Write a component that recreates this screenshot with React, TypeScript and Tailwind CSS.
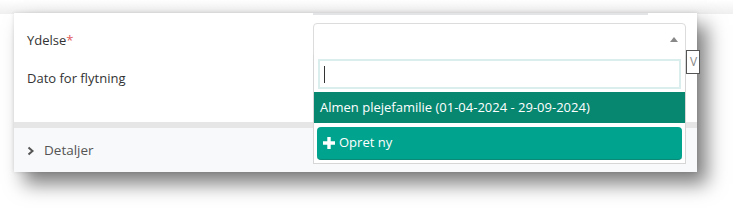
import React from 'react';

export default function App() {
  return (
    <div className="w-[733px] h-[208px] bg-white overflow-hidden relative" style={{ fontFamily: '"Open Sans", "Noto Sans", sans-serif' }}>
      <div className="absolute inset-x-0 top-0 h-[14px] bg-gradient-to-b from-white to-[#efefef]" />
      {/* Kort */}
      <div className="relative ml-[14px] mt-[13px] w-[683px] h-[159px] bg-white shadow-[10px_12px_18px_rgba(0,0,0,0.5),0_0_4px_rgba(0,0,0,0.12)] flex flex-col text-[13px] text-[#333]">
        <div className="absolute left-[299px] top-0 w-[335px] h-[2px] bg-[#e2e4e6]" />
        <div className="flex flex-col pl-[13px] pt-[18px] gap-[20px] h-[109px]">
          <div className="h-[18px] leading-[18px]">
            Ydelse<span className="text-[#e05a5a]">*</span>
          </div>
          <div className="h-[18px] leading-[18px]">Dato for flytning</div>
        </div>
        <div className="h-[6px] bg-[#e6e6e6]" />
        <div className="flex-1 bg-[#f8f9fa] flex items-center pl-[13px] gap-[9px] text-[#555]">
          <svg width="8" height="10" viewBox="0 0 8 10" className="mt-[1px]">
            <path d="M1.5 1.5 L5.5 5 L1.5 8.5" fill="none" stroke="#555" strokeWidth="2" />
          </svg>
          <span className="text-[13.5px]">Detaljer</span>
        </div>

        {/* Skjult knap bag dropdown */}
        <div className="absolute left-[672px] top-[37px] w-[14px] h-[24px] border border-[#555] bg-white overflow-hidden flex items-center pl-[3px] text-[12px] text-[#888]">
          V
        </div>

        {/* Select */}
        <div className="absolute left-[299px] top-[10px] w-[373px] h-[33px] bg-white border border-[#dcdcdc] rounded-t-[4px] flex items-center justify-end pr-[7px]">
          <svg width="8" height="5" viewBox="0 0 8 5">
            <path d="M0 5 L4 0 L8 5 Z" fill="#888" />
          </svg>
        </div>

        {/* Dropdown */}
        <div className="absolute left-[299px] top-[42px] w-[373px] h-[109px] bg-white border border-[#d6d6d6] border-t-0 flex flex-col">
          <div className="mx-[4px] mt-[4px] h-[30px] border-2 border-[#dbeeee] bg-white flex items-center pl-[4px]">
            <div className="w-[1px] h-[17px] bg-[#333]" />
          </div>
          <div className="mt-[3px] h-[31px] bg-[#078670] text-white flex items-center pl-[6px]">
            Almen plejefamilie (01-04-2024 - 29-09-2024)
          </div>
          <div className="mt-[4px] mx-[3px] h-[33px] rounded-[4px] bg-[#00a38e] border-b border-[#0c8a78] text-white flex items-center pl-[6px] gap-[4px]">
            <svg width="12" height="12" viewBox="0 0 12 12">
              <path d="M4.3 0 H7.7 V4.3 H12 V7.7 H7.7 V12 H4.3 V7.7 H0 V4.3 H4.3 Z" fill="white" />
            </svg>
            Opret ny
          </div>
        </div>
      </div>
    </div>
  );
}
